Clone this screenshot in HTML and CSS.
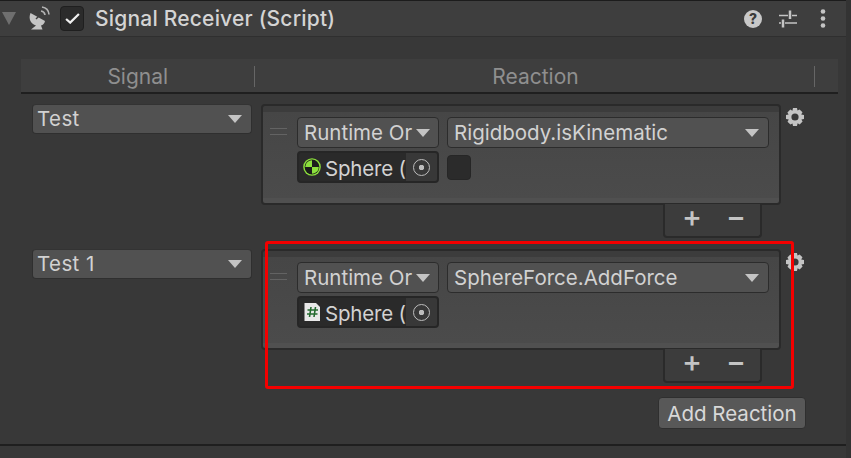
FILE: index.html
```html
<!DOCTYPE html>
<html lang="en">
<head>
<meta charset="utf-8">
<title>Signal Receiver</title>
<link rel="stylesheet" href="styles.css">
</head>
<body>
<div class="page">
  <header class="head">
    <span class="fold"></span>
    <svg class="dish" viewBox="0 0 22 24"><path d="M2.500 7 C0 13 3 18 8 19.500 L3 23.500 L14.500 23.500 L13 19.500 C15 19 16.500 17.500 17 15 Z" fill="#c4c4c4"/><path d="M8 13 L14 7" stroke="#3e3e3e" stroke-width="1.500"/><path d="M13 5 Q16.500 5.500 17 9 M14 1 Q20.500 2 21 8.500" fill="none" stroke="#b4b4b4" stroke-width="1.600"/></svg>
    <span class="enable"><svg viewBox="0 0 16 12"><path d="M1 6.500 L5.500 10.500 L15 1" fill="none" stroke="#f0f0f0" stroke-width="2.400"/></svg></span>
    <span class="title">Signal Receiver (Script)</span>
    <span class="tools">
      <span class="help">?</span>
      <svg class="sliders" viewBox="0 0 18 18"><path d="M0 5.500H9M13 5.500H18M0 13H2M6 13H18" fill="none" stroke="#c4c4c4" stroke-width="1.500"/><path d="M11 0.500V9M4 9.500V17.500" fill="none" stroke="#c4c4c4" stroke-width="2.500"/></svg>
      <svg class="dots" viewBox="0 0 6 19"><circle cx="3" cy="2.500" r="2.300"/><circle cx="3" cy="9.500" r="2.300"/><circle cx="3" cy="16.500" r="2.300"/></svg>
    </span>
  </header>

  <section class="table">
    <div class="cols">
      <div class="col col-signal">Signal</div>
      <div class="col col-reaction">Reaction</div>
    </div>

    <div class="row">
      <div class="popup signal-popup"><span class="label tracked">Test</span><i class="arrow"></i></div>
      <div class="stack">
        <div class="panel">
          <div class="line">
            <span class="handle"></span>
            <div class="popup small"><span class="label">Runtime Or</span><i class="arrow"></i></div>
            <div class="popup wide"><span class="label">Rigidbody.isKinematic</span><i class="arrow"></i></div>
          </div>
          <div class="line second">
            <div class="field">
              <svg class="obj" viewBox="0 0 18 18"><circle cx="9" cy="9" r="8.800" fill="#8ce03c"/><circle cx="9" cy="9" r="7.400" fill="#1c1c1c"/><path d="M9 9V2.200A6.800 6.800 0 0 0 2.200 9ZM9 9V15.800A6.800 6.800 0 0 0 15.800 9Z" fill="#8ce03c"/></svg>
              <span class="name">Sphere (</span>
              <span class="pick"><i></i></span>
            </div>
            <span class="check"></span>
          </div>
        </div>
        <div class="foot"><span class="plus">+</span><span class="minus">−</span></div>
      </div>
      <svg class="gear" viewBox="0 0 20 20"><use href="#cog"/></svg>
    </div>

    <div class="row">
      <div class="popup signal-popup"><span class="label tracked">Test 1</span><i class="arrow"></i></div>
      <div class="stack">
        <div class="panel">
          <div class="line">
            <span class="handle"></span>
            <div class="popup small"><span class="label">Runtime Or</span><i class="arrow"></i></div>
            <div class="popup wide"><span class="label">SphereForce.AddForce</span><i class="arrow"></i></div>
          </div>
          <div class="line second">
            <div class="field">
              <svg class="obj" viewBox="0 0 18 18"><path d="M1.500 0H13L17 4V18H1.500Z" fill="#e8e8e8"/><path d="M8 4L6.500 14M12.500 4L11 14M4.500 7H15M4 11H14.500" fill="none" stroke="#256b30" stroke-width="1.600"/></svg>
              <span class="name">Sphere (</span>
              <span class="pick"><i></i></span>
            </div>
          </div>
        </div>
        <div class="foot"><span class="plus">+</span><span class="minus">−</span></div>
      </div>
      <svg class="gear" viewBox="0 0 20 20"><use href="#cog"/></svg>
    </div>

    <div class="actions"><button class="add" type="button">Add Reaction</button></div>
  </section>

  <div class="rule"></div>
  <div class="marker"></div>
</div>

<svg class="defs" width="0" height="0">
  <defs>
    <g id="cog" fill="#c4c4c4">
      <path fill-rule="evenodd" d="M8 1H12L12.500 3.600L14.600 2.400L17.500 5.300L16.200 7.400L19 8V12L16.400 12.500L17.600 14.600L14.700 17.500L12.600 16.200L12 19H8L7.500 16.400L5.400 17.600L2.500 14.700L3.800 12.600L1 12V8L3.600 7.500L2.400 5.400L5.300 2.500L7.400 3.800ZM10 6.400A3.600 3.600 0 1 0 10 13.600A3.600 3.600 0 1 0 10 6.400Z"/>
    </g>
  </defs>
</svg>
</body>
</html>
```
FILE: styles.css
```css
* { box-sizing: border-box; }
html, body { margin: 0; padding: 0; }
body {
  width: 851px;
  height: 458px;
  overflow: hidden;
  background: #383838;
  font-family: Inter, "Liberation Sans", sans-serif;
  color: #d2d2d2;
}
.page { position: relative; width: 851px; height: 458px; border-right: 5px solid #333; }
.defs { position: absolute; }

.head {
  display: flex;
  align-items: center;
  height: 37px;
  padding-left: 2px;
  background: #3e3e3e;
  border-top: 1px solid #1c1c1c;
  border-bottom: 1px solid #2f2f2f;
}
.fold {
  width: 0; height: 0;
  margin-right: 12px;
  border-left: 7px solid transparent;
  border-right: 7px solid transparent;
  border-top: 13px solid #6f6f6f;
}
.dish { width: 22px; height: 24px; margin: -1px 10px 0 0; flex: none; }
.enable {
  display: flex; align-items: center; justify-content: center;
  width: 24px; height: 25px;
  margin-right: 11px;
  background: #2b2b2b;
  border: 1px solid #1f1f1f;
  border-radius: 4px;
}
.enable svg { width: 15px; height: 11px; }
.title { font-size: 21px; font-weight: 500; letter-spacing: 0.2px; color: #d4d4d4; white-space: nowrap; }
.tools { display: flex; align-items: center; margin-left: auto; margin-right: 20px; }
.help {
  display: flex; align-items: center; justify-content: center;
  width: 18px; height: 18px;
  border-radius: 50%;
  background: #c8c8c8;
  color: #3a3a3a;
  font-size: 14px; font-weight: 800;
  margin-right: 17px;
}
.sliders { width: 18px; height: 18px; margin-right: 23px; }
.dots { width: 6px; height: 19px; fill: #c4c4c4; }

.table { margin: 22px 0 0 21px; width: 817px; }
.cols {
  display: flex;
  height: 35px;
  background: #3e3e3e;
  border-bottom: 2px solid #1f1f1f;
  font-size: 21px;
  color: #8f8f8f;
}
.col { position: relative; display: flex; align-items: center; justify-content: center; padding-top: 1px; }
.col::after {
  content: "";
  position: absolute; right: 0; top: 7px;
  width: 1px; height: 21px;
  background: #666;
}
.col-signal { width: 233.500px; }
.col-reaction { width: 560px; padding-left: 2px; }

.row { display: flex; align-items: flex-start; margin: 10px 0 0 11px; height: 145px; }
.row + .row { margin-top: 0; }
.popup {
  display: flex; align-items: center;
  height: 31px;
  background: #515151;
  border: 1.500px solid #2c2c2c;
  border-radius: 4px;
  font-size: 20.500px;
  color: #d2d2d2;
  padding: 0 9px 0 6px;
}
.label { flex: 1; min-width: 0; overflow: hidden; white-space: nowrap; }
.tracked { letter-spacing: 0.4px; margin: -2px 0 0 -2px; }
.arrow {
  flex: none;
  width: 0; height: 0;
  border-left: 7px solid transparent;
  border-right: 7px solid transparent;
  border-top: 8px solid #c4c4c4;
}
.signal-popup { width: 220px; height: 30px; border-color: #2f2f2f; border-top-color: #333; margin-right: 9px; }

.stack { display: flex; flex-direction: column; align-items: flex-end; width: 520px; }
.panel {
  width: 520px;
  height: 101px;
  padding: 11px 10px 0 7px;
  background: linear-gradient(#3c3c3c 0 6px, #464646 6px, #4b4b4b 92px, #505050 92px);
  border: 2px solid #2a2a2a;
  border-radius: 4px;
}
.line { display: flex; align-items: center; }
.line.second { margin: 3px 0 0 27px; }
.handle {
  flex: none;
  width: 17px; height: 7px;
  margin-right: 10px; margin-top: -2px;
  border-top: 1px solid #636363;
  border-bottom: 1px solid #636363;
}
.small { flex: none; width: 142px; margin-right: 8px; padding: 0 8px 0 6px; }
.wide { flex: 1; }
.field {
  flex: none;
  display: flex; align-items: center;
  width: 142px; height: 32px;
  background: #2a2a2a;
  border: 2px solid #262626;
  border-radius: 4px;
  overflow: hidden;
  padding-left: 4px;
  font-size: 20.500px;
}
.obj { flex: none; width: 18px; height: 18px; margin-right: 4px; }
.name { flex: 1; min-width: 0; overflow: hidden; white-space: nowrap; margin-top: 2px; letter-spacing: -0.2px; }
.pick {
  flex: none;
  display: flex; align-items: center; justify-content: center;
  width: 31px; height: 100%;
  background: #383838;
}
.pick i {
  display: block;
  width: 17px; height: 17px;
  border: 1.500px solid #bdbdbd;
  border-radius: 50%;
  background: radial-gradient(circle, #bdbdbd 0 2.500px, transparent 3px);
}
.check {
  flex: none;
  width: 24px; height: 25px;
  margin-left: 8px;
  background: #2b2b2b;
  border: 1px solid #262626;
  border-radius: 4px;
}
.foot {
  display: flex; align-items: center;
  width: 99px; height: 34px;
  margin: -1px 19px 0 0;
  padding-left: 17px;
  background: #3c3c3c;
  border: 2px solid #2a2a2a;
  border-top: 0;
  border-radius: 0 0 4px 4px;
  color: #c4c4c4;
}
.plus, .minus {
  width: 18px;
  height: 32px;
  line-height: 26px;
  text-align: center;
  font-size: 30px;
  font-weight: 500;
  margin-top: -2px;
}
.minus { margin-left: 26px; }
.gear { flex: none; width: 20px; height: 20px; margin: 3px 0 0 4px; }

.actions { display: flex; justify-content: flex-end; margin-top: 3px; padding-right: 32px; }
.add {
  width: 148px; height: 32px;
  padding: 0;
  background: #585858;
  border: 1.500px solid #2f2f2f;
  border-radius: 4px;
  font: 20.500px Inter, "Liberation Sans", sans-serif;
  color: #d8d8d8;
}
.rule { margin-top: 15px; height: 2px; background: #1f1f1f; }
.marker {
  position: absolute;
  left: 265px; top: 241px;
  width: 529px; height: 148px;
  border: 3px solid #f40000;
  border-radius: 3px;
}
```
